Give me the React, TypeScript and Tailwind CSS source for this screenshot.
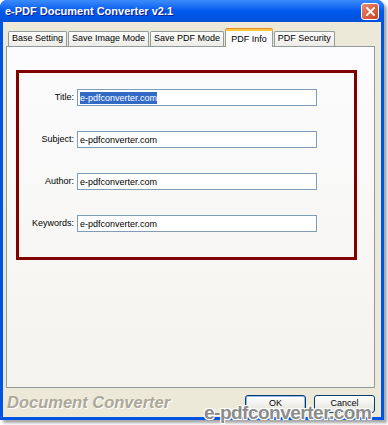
const font = { fontFamily: '"Liberation Sans", Arial, sans-serif' };

const fields = ["Title", "Subject", "Author", "Keywords"];
const tabs = ["Base Setting", "Save Image Mode", "Save PDF Mode", "PDF Info", "PDF Security"];

function Tab({ label, active }: { label: string; active: boolean }) {
  if (active) {
    return (
      <div className="relative z-10 -mb-px flex h-[19px] items-start rounded-t-[3px] border border-b-0 border-[#919B9C] bg-[#FCFCFE] px-[5px]">
        <div className="absolute -left-px -right-px -top-px h-[3px] rounded-t-[3px] border-t border-[#E68B2C] bg-[#FFC83C]" />
        <span className="mt-[4px] text-[9px] text-black">{label}</span>
      </div>
    );
  }
  return (
    <div className="flex h-[15px] items-center rounded-t-[2px] border border-b-0 border-[#919B9C] bg-gradient-to-b from-[#FEFEFE] to-[#ECEBE6] px-[3px]">
      <span className="text-[9px] text-black">{label}</span>
    </div>
  );
}

function Button({ label, primary }: { label: string; primary?: boolean }) {
  return (
    <div
      className={
        "flex h-[18px] w-[61px] items-center justify-center rounded-[3px] border border-[#003C74] bg-gradient-to-b from-[#FFFFFF] to-[#E3E2DA] text-[9px] text-black " +
        (primary ? "shadow-[inset_0_0_0_1px_#98B8EA]" : "")
      }
    >
      {label}
    </div>
  );
}

export default function App() {
  return (
    <div className="relative h-[425px] w-[388px] bg-white" style={font}>
      <div className="flex h-[420px] w-[384px] flex-col rounded-t-[7px] bg-[#0054E3] shadow-[3px_3px_3px_rgba(0,0,0,0.35)]">
        {/* title bar */}
        <div className="flex h-[22px] items-center justify-between rounded-t-[7px] bg-gradient-to-b from-[#3C8CFB] via-[#0058EE] to-[#0252D9] pl-[5px] pr-[5px]">
          <span className="text-[11px] font-bold text-white [text-shadow:1px_1px_0_#0A1E8C]">
            e-PDF Document Converter v2.1
          </span>
          <div className="flex h-[17px] w-[18px] items-center justify-center rounded-[3px] border border-white bg-gradient-to-br from-[#E98A6E] to-[#CC3C1C]">
            <svg width="9" height="9" viewBox="0 0 9 9">
              <path d="M1 1 L8 8 M8 1 L1 8" stroke="white" strokeWidth="1.8" strokeLinecap="square" />
            </svg>
          </div>
        </div>

        {/* body */}
        <div className="mx-[3px] mb-[3px] flex flex-1 flex-col bg-[#ECE9D8]">
          <div className="ml-[5px] mt-[5px] flex h-[19px] items-end gap-[1px]">
            {tabs.map((t) => (
              <Tab key={t} label={t} active={t === "PDF Info"} />
            ))}
          </div>

          <div className="ml-[3px] h-[342px] w-[369px] border border-[#919B9C] bg-gradient-to-b from-[#FCFCFE] to-[#F4F3EE] pl-[9px] pt-[23px]">
            <div className="flex h-[190px] w-[341px] flex-col gap-[25px] border-[3px] border-[#800000] pt-[16px]">
              {fields.map((f, i) => (
                <div key={f} className="flex h-[17px] items-center">
                  <span className="w-[56px] pr-[1px] text-right text-[9px] text-black">{f}:</span>
                  <div className="ml-[2px] flex h-[17px] w-[240px] items-center border border-[#7F9DB9] bg-white pl-[2px]">
                    <span
                      className={
                        "text-[9px] leading-[12px] " +
                        (i === 0 ? "bg-[#316AC5] text-white" : "text-black")
                      }
                    >
                      e-pdfconverter.com
                    </span>
                  </div>
                </div>
              ))}
            </div>
          </div>

          <div className="flex flex-1 items-center justify-between pl-[4px] pr-[6px]">
            <span className="text-[16.5px] font-bold italic text-[#ACA899] [text-shadow:1px_1px_0_#FFFFFF]">
              Document Converter
            </span>
            <div className="mt-[2px] flex gap-[8px]">
              <Button label="OK" primary />
              <Button label="Cancel" />
            </div>
          </div>
        </div>
      </div>

      {/* watermark */}
      <div className="absolute left-[204px] top-[399px] text-[19px] font-bold tracking-[-0.5px] text-[#8C8C8C] [text-shadow:-1px_-1px_0_#fff,1px_-1px_0_#fff,-1px_1px_0_#fff,1px_1px_0_#fff]">
        e-pdfconverter.com
      </div>
    </div>
  );
}
